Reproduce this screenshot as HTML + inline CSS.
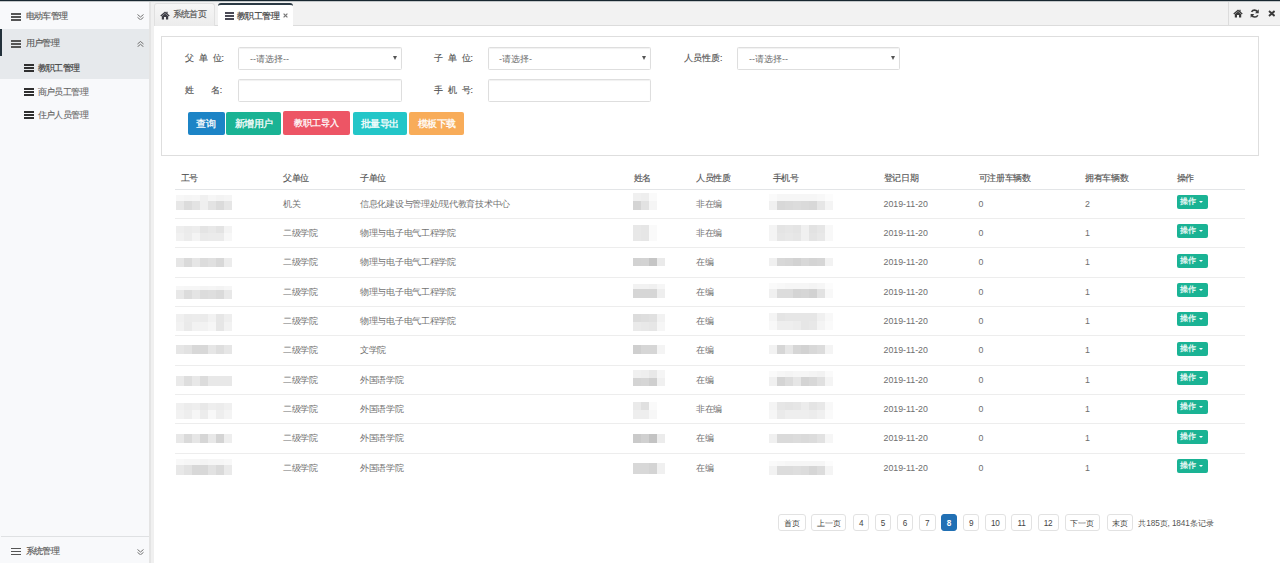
<!DOCTYPE html>
<html><head><meta charset="utf-8">
<style>
*{margin:0;padding:0;box-sizing:border-box}
html,body{width:1280px;height:563px;overflow:hidden;background:#fff;font-family:"Liberation Sans",sans-serif;font-size:8.5px;color:#676a6c;position:relative}
.a{position:absolute}
.t{position:absolute;white-space:nowrap;line-height:10px;letter-spacing:-0.3px}
.ham{position:absolute;width:10px;height:8px}
.ham i{position:absolute;left:0;width:9.6px;height:1.65px;background:#555}
.ham i:nth-child(1){top:0}.ham i:nth-child(2){top:3px}.ham i:nth-child(3){top:6px}
.st{color:#5a5a5a;letter-spacing:-0.6px;-webkit-text-stroke:0.15px #5a5a5a}
.tab{position:absolute;top:3px;height:23px;border-radius:3px 3px 0 0}
.sel{position:absolute;height:23px;border:1px solid #dedede;border-radius:1.5px;background:#fff;box-shadow:inset 0 1px 1px rgba(0,0,0,.06)}
.lbl{color:#555;letter-spacing:0;font-size:8.6px;-webkit-text-stroke:0.15px #555}
.ph{color:#6e6e6e;font-size:9px;letter-spacing:0}
.btn{position:absolute;top:112px;height:23px;border-radius:2px;color:#fff;text-align:center;line-height:23px;font-size:9.5px;letter-spacing:-0.45px;white-space:nowrap;-webkit-text-stroke:0.25px #fff}
.arrow{position:absolute;width:0;height:0;border-left:2.3px solid transparent;border-right:2.3px solid transparent;border-top:4.2px solid #555}
.th{color:#555;-webkit-text-stroke:0.15px #555}
.td{color:#727272}
.num{letter-spacing:0;font-size:8.8px;color:#6e6e6e}
.rl{left:175px;width:1070px;height:1px;background:#ededed}
.opb{position:absolute;left:1176.5px;width:31.5px;height:14px;background:#1ab394;border-radius:2px}
.opb span{position:absolute;left:3.5px;top:2px;color:#fff;font-size:8.2px;line-height:10px;letter-spacing:-0.4px;white-space:nowrap;-webkit-text-stroke:0.2px #fff}
.caret{position:absolute;left:22.5px;top:6px;width:0;height:0;border-left:2.5px solid transparent;border-right:2.5px solid transparent;border-top:2.5px solid #fff}
.mz{filter:blur(0.5px)}
.pg{position:absolute;top:514px;height:16.6px;border:1px solid #e2e2e2;border-radius:3px;background:#fff;color:#444;text-align:center;line-height:17px;font-size:8.2px;white-space:nowrap;letter-spacing:-0.2px}
.pg.act{background:#2170b4;border-color:#2170b4;color:#fff;font-weight:bold}
</style></head><body>
<div class="a" style="left:0;top:0;width:1280px;height:1px;background:#182730"></div>
<div class="a" style="left:0;top:1px;width:1280px;height:1px;background:#c3c7c9"></div>
<div class="a" style="left:0;top:2px;width:149px;height:561px;background:#f8f9fb"></div>
<div class="a" style="left:149px;top:2px;width:2px;height:561px;background:#e4e4e4"></div>
<div class="a" style="left:151px;top:2px;width:3px;height:561px;background:#f0f0f0"></div>
<div class="ham" style="left:11px;top:13px"><i style="background:#555"></i><i style="background:#555"></i><i style="background:#555"></i></div>
<div class="t st" style="left:25.5px;top:10.5px">电动车管理</div>
<svg class="a" style="left:137.2px;top:13.5px" width="7" height="6.5" viewBox="0 0 7 6.5"><path d="M0.5 0.5 L3.5 3 L6.5 0.5 M0.5 3.3 L3.5 5.8 L6.5 3.3" fill="none" stroke="#6a6a6a" stroke-width="0.95"/></svg>
<div class="a" style="left:0;top:28.5px;width:149px;height:50.5px;background:#e6e9ec"></div>
<div class="a" style="left:0;top:29px;width:2px;height:27px;background:#23313b"></div>
<div class="ham" style="left:11px;top:40px"><i style="background:#555"></i><i style="background:#555"></i><i style="background:#555"></i></div>
<div class="t st" style="left:25.5px;top:38px">用户管理</div>
<svg class="a" style="left:137.2px;top:40.5px" width="7" height="6.5" viewBox="0 0 7 6.5"><path d="M0.5 3 L3.5 0.5 L6.5 3 M0.5 5.8 L3.5 3.3 L6.5 5.8" fill="none" stroke="#6a6a6a" stroke-width="0.95"/></svg>
<div class="ham" style="left:24px;top:64.2px"><i style="background:#303030"></i><i style="background:#303030"></i><i style="background:#303030"></i></div>
<div class="t st" style="left:37.5px;top:63px;color:#444;-webkit-text-stroke:0.2px #444">教职工管理</div>
<div class="ham" style="left:24px;top:88.2px"><i style="background:#303030"></i><i style="background:#303030"></i><i style="background:#303030"></i></div>
<div class="t st" style="left:37.5px;top:86.5px;color:#666;-webkit-text-stroke:0.1px #666">商户员工管理</div>
<div class="ham" style="left:24px;top:111.4px"><i style="background:#303030"></i><i style="background:#303030"></i><i style="background:#303030"></i></div>
<div class="t st" style="left:37.5px;top:109.5px;color:#666;-webkit-text-stroke:0.1px #666">住户人员管理</div>
<div class="a" style="left:1px;top:536px;width:148px;height:1px;background:#dfe1e3"></div>
<div class="ham" style="left:11px;top:547.5px"><i style="background:#555"></i><i style="background:#555"></i><i style="background:#555"></i></div>
<div class="t st" style="left:25.5px;top:546px">系统管理</div>
<svg class="a" style="left:137.2px;top:548.6px" width="7" height="6.5" viewBox="0 0 7 6.5"><path d="M0.5 0.5 L3.5 3 L6.5 0.5 M0.5 3.3 L3.5 5.8 L6.5 3.3" fill="none" stroke="#6a6a6a" stroke-width="0.95"/></svg>
<div class="a" style="left:154px;top:2px;width:1126px;height:24px;background:#f2f2f2;border-bottom:1px solid #dcdcdc"></div>
<div class="tab" style="left:154px;width:61px;background:linear-gradient(#f6f6f6,#ececec);border:1px solid #e0e0e0;border-bottom:none"></div>
<svg class="a" style="left:160.2px;top:11px" width="10" height="8.6" viewBox="0 0 10 8.6"><path d="M5 0.6 L0.3 4.6 L1.2 5.4 L5 2.2 L8.8 5.4 L9.7 4.6 L7.6 2.8 L7.6 0.8 L6.4 0.8 L6.4 1.8 Z" fill="#3c3c44"/><path d="M1.8 5.2 L5 2.6 L8.2 5.2 L8.2 8.4 L6 8.4 L6 6 L4 6 L4 8.4 L1.8 8.4 Z" fill="#3c3c44"/></svg>
<div class="t st" style="left:172.7px;top:8.7px;color:#555;-webkit-text-stroke:0.15px #555">系统首页</div>
<div class="tab" style="left:218px;width:75px;background:#fff;border-top:2px solid #2b3a44"></div>
<div class="ham" style="left:224.8px;top:12px"><i style="background:#4a4a56"></i><i style="background:#4a4a56"></i><i style="background:#4a4a56"></i></div>
<div class="t st" style="left:237px;top:11px;color:#444;-webkit-text-stroke:0.2px #444">教职工管理</div>
<svg class="a" style="left:283px;top:12.5px" width="5" height="5" viewBox="0 0 5 5"><path d="M0.6 0.6 L4.4 4.4 M4.4 0.6 L0.6 4.4" stroke="#777" stroke-width="1.2"/></svg>
<div class="a" style="left:1228px;top:2px;width:1px;height:23px;background:#dcdcdc"></div>
<svg class="a" style="left:1232.6px;top:9px" width="10" height="8.6" viewBox="0 0 10 8.6"><path d="M5 0.6 L0.3 4.6 L1.2 5.4 L5 2.2 L8.8 5.4 L9.7 4.6 L7.6 2.8 L7.6 0.8 L6.4 0.8 L6.4 1.8 Z" fill="#3a3a3a"/><path d="M1.8 5.2 L5 2.6 L8.2 5.2 L8.2 8.4 L6 8.4 L6 6 L4 6 L4 8.4 L1.8 8.4 Z" fill="#3a3a3a"/></svg>
<svg class="a" style="left:1249.8px;top:8.8px" width="9.4" height="9.2" viewBox="0 0 10 10"><path d="M8.2 3.6 A3.6 3.6 0 0 0 1.6 3.2" fill="none" stroke="#3a3a3a" stroke-width="1.7"/><path d="M9.4 0.4 L9.4 4.6 L5.4 4.6 Z" fill="#3a3a3a"/><path d="M1.8 6.4 A3.6 3.6 0 0 0 8.4 6.8" fill="none" stroke="#3a3a3a" stroke-width="1.7"/><path d="M0.6 9.6 L0.6 5.4 L4.6 5.4 Z" fill="#3a3a3a"/></svg>
<svg class="a" style="left:1267.6px;top:10.2px" width="7.6" height="7" viewBox="0 0 7.6 7"><path d="M1 1 L6.6 6 M6.6 1 L1 6" stroke="#3a3a3a" stroke-width="1.9"/></svg>
<div class="a" style="left:161px;top:36px;width:1098px;height:120px;border:1px solid #dedede"></div>
<div class="t lbl" style="left:185px;top:52.5px">父&nbsp;&nbsp;单&nbsp;&nbsp;位:</div>
<div class="sel" style="left:238px;top:46.5px;width:164px"></div>
<div class="t ph" style="left:250px;top:53.5px">--请选择--</div>
<div class="arrow" style="left:392.5px;top:56px"></div>
<div class="t lbl" style="left:434px;top:52.5px">子&nbsp;&nbsp;单&nbsp;&nbsp;位:</div>
<div class="sel" style="left:488px;top:46.5px;width:163px"></div>
<div class="t ph" style="left:499px;top:53.5px">-请选择-</div>
<div class="arrow" style="left:641.5px;top:56px"></div>
<div class="t lbl" style="left:684px;top:52.5px">人员性质:</div>
<div class="sel" style="left:737px;top:46.5px;width:163px"></div>
<div class="t ph" style="left:749px;top:53.5px">--请选择--</div>
<div class="arrow" style="left:891.3px;top:56px"></div>
<div class="t lbl" style="left:185px;top:84.8px">姓&nbsp;&nbsp;&nbsp;&nbsp;&nbsp;&nbsp;&nbsp;名:</div>
<div class="sel" style="left:238px;top:79px;width:164px"></div>
<div class="t lbl" style="left:434px;top:84.8px">手&nbsp;&nbsp;机&nbsp;&nbsp;号:</div>
<div class="sel" style="left:488px;top:79px;width:163px"></div>
<div class="btn" style="left:188px;width:36.5px;background:#1c84c6;text-indent:-1px">查询</div>
<div class="btn" style="left:226.2px;width:55px;background:#1ab394">新增用户</div>
<div class="btn" style="left:283px;top:111.2px;height:23.6px;width:67px;background:#ed5565;font-size:8.5px;letter-spacing:-0.15px;line-height:25px">教职工导入</div>
<div class="btn" style="left:352.6px;width:54.5px;background:#23c6c8">批量导出</div>
<div class="btn" style="left:409.4px;width:54.6px;background:#f8ac59">模板下载</div>
<div class="t th" style="left:180.5px;top:172.5px">工号</div>
<div class="t th" style="left:283px;top:172.5px">父单位</div>
<div class="t th" style="left:360px;top:172.5px">子单位</div>
<div class="t th" style="left:633.5px;top:172.5px">姓名</div>
<div class="t th" style="left:696px;top:172.5px">人员性质</div>
<div class="t th" style="left:772.5px;top:172.5px">手机号</div>
<div class="t th" style="left:883.5px;top:172.5px">登记日期</div>
<div class="t th" style="left:978.5px;top:172.5px">可注册车辆数</div>
<div class="t th" style="left:1085px;top:172.5px">拥有车辆数</div>
<div class="t th" style="left:1176.5px;top:172.5px">操作</div>
<div class="a" style="left:175px;top:188.6px;width:1070px;height:1.3px;background:#e3e5e7"></div>
<div class="t td" style="left:283px;top:198.70px">机关</div>
<div class="t td" style="left:360px;top:198.70px">信息化建设与管理处/现代教育技术中心</div>
<div class="t td" style="left:696px;top:198.70px">非在编</div>
<div class="t td num" style="left:883.5px;top:198.70px">2019-11-20</div>
<div class="t td num" style="left:978.5px;top:198.70px">0</div>
<div class="t td num" style="left:1085px;top:198.70px">2</div>
<div class="opb" style="top:195.10px"><span>操作</span><i class="caret"></i></div>
<div class="a rl" style="top:218.10px"></div>
<div class="t td" style="left:283px;top:228.03px">二级学院</div>
<div class="t td" style="left:360px;top:228.03px">物理与电子电气工程学院</div>
<div class="t td" style="left:696px;top:228.03px">非在编</div>
<div class="t td num" style="left:883.5px;top:228.03px">2019-11-20</div>
<div class="t td num" style="left:978.5px;top:228.03px">0</div>
<div class="t td num" style="left:1085px;top:228.03px">1</div>
<div class="opb" style="top:224.43px"><span>操作</span><i class="caret"></i></div>
<div class="a rl" style="top:247.43px"></div>
<div class="t td" style="left:283px;top:257.37px">二级学院</div>
<div class="t td" style="left:360px;top:257.37px">物理与电子电气工程学院</div>
<div class="t td" style="left:696px;top:257.37px">在编</div>
<div class="t td num" style="left:883.5px;top:257.37px">2019-11-20</div>
<div class="t td num" style="left:978.5px;top:257.37px">0</div>
<div class="t td num" style="left:1085px;top:257.37px">1</div>
<div class="opb" style="top:253.77px"><span>操作</span><i class="caret"></i></div>
<div class="a rl" style="top:276.77px"></div>
<div class="t td" style="left:283px;top:286.70px">二级学院</div>
<div class="t td" style="left:360px;top:286.70px">物理与电子电气工程学院</div>
<div class="t td" style="left:696px;top:286.70px">在编</div>
<div class="t td num" style="left:883.5px;top:286.70px">2019-11-20</div>
<div class="t td num" style="left:978.5px;top:286.70px">0</div>
<div class="t td num" style="left:1085px;top:286.70px">1</div>
<div class="opb" style="top:283.10px"><span>操作</span><i class="caret"></i></div>
<div class="a rl" style="top:306.10px"></div>
<div class="t td" style="left:283px;top:316.03px">二级学院</div>
<div class="t td" style="left:360px;top:316.03px">物理与电子电气工程学院</div>
<div class="t td" style="left:696px;top:316.03px">在编</div>
<div class="t td num" style="left:883.5px;top:316.03px">2019-11-20</div>
<div class="t td num" style="left:978.5px;top:316.03px">0</div>
<div class="t td num" style="left:1085px;top:316.03px">1</div>
<div class="opb" style="top:312.43px"><span>操作</span><i class="caret"></i></div>
<div class="a rl" style="top:335.43px"></div>
<div class="t td" style="left:283px;top:345.37px">二级学院</div>
<div class="t td" style="left:360px;top:345.37px">文学院</div>
<div class="t td" style="left:696px;top:345.37px">在编</div>
<div class="t td num" style="left:883.5px;top:345.37px">2019-11-20</div>
<div class="t td num" style="left:978.5px;top:345.37px">0</div>
<div class="t td num" style="left:1085px;top:345.37px">1</div>
<div class="opb" style="top:341.76px"><span>操作</span><i class="caret"></i></div>
<div class="a rl" style="top:364.76px"></div>
<div class="t td" style="left:283px;top:374.70px">二级学院</div>
<div class="t td" style="left:360px;top:374.70px">外国语学院</div>
<div class="t td" style="left:696px;top:374.70px">在编</div>
<div class="t td num" style="left:883.5px;top:374.70px">2019-11-20</div>
<div class="t td num" style="left:978.5px;top:374.70px">0</div>
<div class="t td num" style="left:1085px;top:374.70px">1</div>
<div class="opb" style="top:371.10px"><span>操作</span><i class="caret"></i></div>
<div class="a rl" style="top:394.10px"></div>
<div class="t td" style="left:283px;top:404.03px">二级学院</div>
<div class="t td" style="left:360px;top:404.03px">外国语学院</div>
<div class="t td" style="left:696px;top:404.03px">非在编</div>
<div class="t td num" style="left:883.5px;top:404.03px">2019-11-20</div>
<div class="t td num" style="left:978.5px;top:404.03px">0</div>
<div class="t td num" style="left:1085px;top:404.03px">1</div>
<div class="opb" style="top:400.43px"><span>操作</span><i class="caret"></i></div>
<div class="a rl" style="top:423.43px"></div>
<div class="t td" style="left:283px;top:433.36px">二级学院</div>
<div class="t td" style="left:360px;top:433.36px">外国语学院</div>
<div class="t td" style="left:696px;top:433.36px">在编</div>
<div class="t td num" style="left:883.5px;top:433.36px">2019-11-20</div>
<div class="t td num" style="left:978.5px;top:433.36px">0</div>
<div class="t td num" style="left:1085px;top:433.36px">1</div>
<div class="opb" style="top:429.76px"><span>操作</span><i class="caret"></i></div>
<div class="a rl" style="top:452.76px"></div>
<div class="t td" style="left:283px;top:462.70px">二级学院</div>
<div class="t td" style="left:360px;top:462.70px">外国语学院</div>
<div class="t td" style="left:696px;top:462.70px">在编</div>
<div class="t td num" style="left:883.5px;top:462.70px">2019-11-20</div>
<div class="t td num" style="left:978.5px;top:462.70px">0</div>
<div class="t td num" style="left:1085px;top:462.70px">1</div>
<div class="opb" style="top:459.10px"><span>操作</span><i class="caret"></i></div>
<div class="a mz" style="left:176.1px;top:194.9px;width:56.0px;height:6.9px;background:linear-gradient(90deg,#f7f7f7 0.0px 8.0px,#f5f5f5 8.0px 16.0px,#f6f6f6 16.0px 24.0px,#f0f0f0 24.0px 32.0px,#f6f6f6 32.0px 40.0px,#f3f3f3 40.0px 48.0px,#f5f5f5 48.0px 56.0px)"></div>
<div class="a mz" style="left:176.1px;top:201.2px;width:56.0px;height:8.4px;background:linear-gradient(90deg,#e7e7e7 0.0px 8.0px,#dcdcdc 8.0px 16.0px,#e3e3e3 16.0px 24.0px,#efefef 24.0px 32.0px,#e3e3e3 32.0px 40.0px,#dbdbdb 40.0px 48.0px,#e6e6e6 48.0px 56.0px)"></div>
<div class="a mz" style="left:632.7px;top:193px;width:24.0px;height:8.6px;background:linear-gradient(90deg,#f0f0f0 0.0px 8.0px,#eeeeee 8.0px 16.0px,#fafafa 16.0px 24.0px)"></div>
<div class="a mz" style="left:632.7px;top:201px;width:24.0px;height:8.9px;background:linear-gradient(90deg,#d4d4d4 0.0px 8.0px,#e2e2e2 8.0px 16.0px,#f5f5f5 16.0px 24.0px)"></div>
<div class="a mz" style="left:768.9px;top:193.9px;width:64.4px;height:7.6px;background:linear-gradient(90deg,#fafafa 0.0px 8.1px,#f6f6f6 8.1px 16.1px,#f6f6f6 16.1px 24.2px,#f6f6f6 24.2px 32.2px,#f6f6f6 32.2px 40.2px,#f6f6f6 40.2px 48.3px,#f8f8f8 48.3px 56.4px,#fcfcfc 56.4px 64.4px)"></div>
<div class="a mz" style="left:768.9px;top:200.9px;width:64.4px;height:9.0px;background:linear-gradient(90deg,#f0f0f0 0.0px 8.1px,#d8d8d8 8.1px 16.1px,#dadada 16.1px 24.2px,#dcdcdc 24.2px 32.2px,#dadada 32.2px 40.2px,#d8d8d8 40.2px 48.3px,#e6e6e6 48.3px 56.4px,#f4f4f4 56.4px 64.4px)"></div>
<div class="a mz" style="left:176.1px;top:225.6px;width:56.0px;height:8.2px;background:linear-gradient(90deg,#eeeeee 0.0px 8.0px,#ebebeb 8.0px 16.0px,#ededed 16.0px 24.0px,#e4e4e4 24.0px 32.0px,#e8e8e8 32.0px 40.0px,#e3e3e3 40.0px 48.0px,#f3f3f3 48.0px 56.0px)"></div>
<div class="a mz" style="left:176.1px;top:233.2px;width:56.0px;height:8.2px;background:linear-gradient(90deg,#f1f1f1 0.0px 8.0px,#ececec 8.0px 16.0px,#f4f4f4 16.0px 24.0px,#eaeaea 24.0px 32.0px,#ebebeb 32.0px 40.0px,#ebebeb 40.0px 48.0px,#f7f7f7 48.0px 56.0px)"></div>
<div class="a mz" style="left:632.7px;top:224.8px;width:24.0px;height:8.3px;background:linear-gradient(90deg,#e8e8e8 0.0px 8.0px,#e6e6e6 8.0px 16.0px,#fafafa 16.0px 24.0px)"></div>
<div class="a mz" style="left:632.7px;top:232.5px;width:24.0px;height:8.4px;background:linear-gradient(90deg,#e8e8e8 0.0px 8.0px,#e6e6e6 8.0px 16.0px,#fafafa 16.0px 24.0px)"></div>
<div class="a mz" style="left:768.9px;top:224.8px;width:64.4px;height:8.3px;background:linear-gradient(90deg,#f4f4f4 0.0px 8.1px,#e4e4e4 8.1px 16.1px,#e6e6e6 16.1px 24.2px,#e4e4e4 24.2px 32.2px,#f0f0f0 32.2px 40.2px,#e2e2e2 40.2px 48.3px,#e6e6e6 48.3px 56.4px,#f8f8f8 56.4px 64.4px)"></div>
<div class="a mz" style="left:768.9px;top:232.5px;width:64.4px;height:8.4px;background:linear-gradient(90deg,#f4f4f4 0.0px 8.1px,#e6e6e6 8.1px 16.1px,#e8e8e8 16.1px 24.2px,#e6e6e6 24.2px 32.2px,#f0f0f0 32.2px 40.2px,#e4e4e4 40.2px 48.3px,#e8e8e8 48.3px 56.4px,#f8f8f8 56.4px 64.4px)"></div>
<div class="a mz" style="left:176.1px;top:258px;width:56.0px;height:8.6px;background:linear-gradient(90deg,#e6e6e6 0.0px 8.0px,#dadada 8.0px 16.0px,#e6e6e6 16.0px 24.0px,#dcdcdc 24.0px 32.0px,#e0e0e0 32.0px 40.0px,#d8d8d8 40.0px 48.0px,#ececec 48.0px 56.0px)"></div>
<div class="a mz" style="left:632.7px;top:257.5px;width:32.0px;height:8.6px;background:linear-gradient(90deg,#d2d2d2 0.0px 8.0px,#d3d3d3 8.0px 16.0px,#c5c5c5 16.0px 24.0px,#eaeaea 24.0px 32.0px)"></div>
<div class="a mz" style="left:768.9px;top:257.5px;width:64.4px;height:8.6px;background:linear-gradient(90deg,#f0f0f0 0.0px 8.1px,#d8d8d8 8.1px 16.1px,#d6d6d6 16.1px 24.2px,#d2d2d2 24.2px 32.2px,#d8d8d8 32.2px 40.2px,#d4d4d4 40.2px 48.3px,#d6d6d6 48.3px 56.4px,#f2f2f2 56.4px 64.4px)"></div>
<div class="a mz" style="left:176.1px;top:286px;width:56.0px;height:4.6px;background:linear-gradient(90deg,#f7f7f7 0.0px 8.0px,#f6f6f6 8.0px 16.0px,#f6f6f6 16.0px 24.0px,#f4f4f4 24.0px 32.0px,#f5f5f5 32.0px 40.0px,#f3f3f3 40.0px 48.0px,#f6f6f6 48.0px 56.0px)"></div>
<div class="a mz" style="left:176.1px;top:290px;width:56.0px;height:8.6px;background:linear-gradient(90deg,#e8e8e8 0.0px 8.0px,#dcdcdc 8.0px 16.0px,#e4e4e4 16.0px 24.0px,#dcdcdc 24.0px 32.0px,#dedede 32.0px 40.0px,#dadada 40.0px 48.0px,#e8e8e8 48.0px 56.0px)"></div>
<div class="a mz" style="left:632.7px;top:284px;width:32.0px;height:5.6px;background:linear-gradient(90deg,#f2f2f2 0.0px 8.0px,#f2f2f2 8.0px 16.0px,#f0f0f0 16.0px 24.0px,#f6f6f6 24.0px 32.0px)"></div>
<div class="a mz" style="left:632.7px;top:289px;width:32.0px;height:8.6px;background:linear-gradient(90deg,#d6d6d6 0.0px 8.0px,#d6d6d6 8.0px 16.0px,#d6d6d6 16.0px 24.0px,#eeeeee 24.0px 32.0px)"></div>
<div class="a mz" style="left:768.9px;top:282.8px;width:64.4px;height:7.1px;background:linear-gradient(90deg,#fafafa 0.0px 8.1px,#f8f8f8 8.1px 16.1px,#f6f6f6 16.1px 24.2px,#f6f6f6 24.2px 32.2px,#f6f6f6 32.2px 40.2px,#f4f4f4 40.2px 48.3px,#f6f6f6 48.3px 56.4px,#fcfcfc 56.4px 64.4px)"></div>
<div class="a mz" style="left:768.9px;top:289.3px;width:64.4px;height:9.0px;background:linear-gradient(90deg,#f0f0f0 0.0px 8.1px,#dcdcdc 8.1px 16.1px,#dcdcdc 16.1px 24.2px,#d4d4d4 24.2px 32.2px,#d6d6d6 32.2px 40.2px,#d2d2d2 40.2px 48.3px,#e2e2e2 48.3px 56.4px,#f8f8f8 56.4px 64.4px)"></div>
<div class="a mz" style="left:176.1px;top:314px;width:56.0px;height:8.6px;background:linear-gradient(90deg,#f0f0f0 0.0px 8.0px,#ebebeb 8.0px 16.0px,#ececec 16.0px 24.0px,#ebebeb 24.0px 32.0px,#f2f2f2 32.0px 40.0px,#e6e6e6 40.0px 48.0px,#eeeeee 48.0px 56.0px)"></div>
<div class="a mz" style="left:176.1px;top:322px;width:56.0px;height:8.6px;background:linear-gradient(90deg,#f2f2f2 0.0px 8.0px,#eaeaea 8.0px 16.0px,#f2f2f2 16.0px 24.0px,#f2f2f2 24.0px 32.0px,#f6f6f6 32.0px 40.0px,#e6e6e6 40.0px 48.0px,#f2f2f2 48.0px 56.0px)"></div>
<div class="a mz" style="left:632.7px;top:313.7px;width:32.0px;height:8.9px;background:linear-gradient(90deg,#dcdcdc 0.0px 8.0px,#dedede 8.0px 16.0px,#e0e0e0 16.0px 24.0px,#f2f2f2 24.0px 32.0px)"></div>
<div class="a mz" style="left:632.7px;top:322px;width:32.0px;height:9.1px;background:linear-gradient(90deg,#eaeaea 0.0px 8.0px,#e8e8e8 8.0px 16.0px,#e6e6e6 16.0px 24.0px,#f6f6f6 24.0px 32.0px)"></div>
<div class="a mz" style="left:768.9px;top:313.2px;width:64.4px;height:8.8px;background:linear-gradient(90deg,#f4f4f4 0.0px 8.1px,#e4e4e4 8.1px 16.1px,#e6e6e6 16.1px 24.2px,#e6e6e6 24.2px 32.2px,#e6e6e6 32.2px 40.2px,#e6e6e6 40.2px 48.3px,#f0f0f0 48.3px 56.4px,#f8f8f8 56.4px 64.4px)"></div>
<div class="a mz" style="left:768.9px;top:321.4px;width:64.4px;height:8.9px;background:linear-gradient(90deg,#f8f8f8 0.0px 8.1px,#eeeeee 8.1px 16.1px,#eeeeee 16.1px 24.2px,#ececec 24.2px 32.2px,#e6e6e6 32.2px 40.2px,#e8e8e8 40.2px 48.3px,#f4f4f4 48.3px 56.4px,#fafafa 56.4px 64.4px)"></div>
<div class="a mz" style="left:176.1px;top:345.3px;width:56.0px;height:8.9px;background:linear-gradient(90deg,#e6e6e6 0.0px 8.0px,#e2e2e2 8.0px 16.0px,#d8d8d8 16.0px 24.0px,#d8d8d8 24.0px 32.0px,#e6e6e6 32.0px 40.0px,#dedede 40.0px 48.0px,#e6e6e6 48.0px 56.0px)"></div>
<div class="a mz" style="left:632.7px;top:345.3px;width:32.0px;height:8.9px;background:linear-gradient(90deg,#cfcfcf 0.0px 8.0px,#d6d6d6 8.0px 16.0px,#d6d6d6 16.0px 24.0px,#f4f4f4 24.0px 32.0px)"></div>
<div class="a mz" style="left:768.9px;top:345.3px;width:64.4px;height:8.9px;background:linear-gradient(90deg,#f2f2f2 0.0px 8.1px,#d6d6d6 8.1px 16.1px,#e6e6e6 16.1px 24.2px,#d6d6d6 24.2px 32.2px,#d2d2d2 32.2px 40.2px,#d8d8d8 40.2px 48.3px,#dcdcdc 48.3px 56.4px,#f4f4f4 56.4px 64.4px)"></div>
<div class="a mz" style="left:176.1px;top:376.2px;width:56.0px;height:9.6px;background:linear-gradient(90deg,#eaeaea 0.0px 8.0px,#dedede 8.0px 16.0px,#e8e8e8 16.0px 24.0px,#dcdcdc 24.0px 32.0px,#e8e8e8 32.0px 40.0px,#e8e8e8 40.0px 48.0px,#e8e8e8 48.0px 56.0px)"></div>
<div class="a mz" style="left:632.7px;top:369.8px;width:32.0px;height:8.6px;background:linear-gradient(90deg,#f0f0f0 0.0px 8.0px,#eeeeee 8.0px 16.0px,#e8e8e8 16.0px 24.0px,#f5f5f5 24.0px 32.0px)"></div>
<div class="a mz" style="left:632.7px;top:377.8px;width:32.0px;height:8.6px;background:linear-gradient(90deg,#d4d4d4 0.0px 8.0px,#d6d6d6 8.0px 16.0px,#cfcfcf 16.0px 24.0px,#f0f0f0 24.0px 32.0px)"></div>
<div class="a mz" style="left:768.9px;top:371px;width:64.4px;height:6.6px;background:linear-gradient(90deg,#fafafa 0.0px 8.1px,#f6f6f6 8.1px 16.1px,#f4f4f4 16.1px 24.2px,#f6f6f6 24.2px 32.2px,#f6f6f6 32.2px 40.2px,#f4f4f4 40.2px 48.3px,#f2f2f2 48.3px 56.4px,#fafafa 56.4px 64.4px)"></div>
<div class="a mz" style="left:768.9px;top:377px;width:64.4px;height:8.9px;background:linear-gradient(90deg,#f0f0f0 0.0px 8.1px,#d4d4d4 8.1px 16.1px,#dcdcdc 16.1px 24.2px,#e6e6e6 24.2px 32.2px,#d4d4d4 32.2px 40.2px,#d8d8d8 40.2px 48.3px,#e0e0e0 48.3px 56.4px,#f4f4f4 56.4px 64.4px)"></div>
<div class="a mz" style="left:176.1px;top:402.5px;width:56.0px;height:8.3px;background:linear-gradient(90deg,#f0f0f0 0.0px 8.0px,#ececec 8.0px 16.0px,#eeeeee 16.0px 24.0px,#e8e8e8 24.0px 32.0px,#eeeeee 32.0px 40.0px,#ececec 40.0px 48.0px,#f0f0f0 48.0px 56.0px)"></div>
<div class="a mz" style="left:176.1px;top:410.2px;width:56.0px;height:8.4px;background:linear-gradient(90deg,#f2f2f2 0.0px 8.0px,#eeeeee 8.0px 16.0px,#f6f6f6 16.0px 24.0px,#ececec 24.0px 32.0px,#f8f8f8 32.0px 40.0px,#eeeeee 40.0px 48.0px,#f4f4f4 48.0px 56.0px)"></div>
<div class="a mz" style="left:632.7px;top:401.5px;width:24.0px;height:8.8px;background:linear-gradient(90deg,#eaeaea 0.0px 8.0px,#e0e0e0 8.0px 16.0px,#fafafa 16.0px 24.0px)"></div>
<div class="a mz" style="left:632.7px;top:409.7px;width:24.0px;height:8.9px;background:linear-gradient(90deg,#eeeeee 0.0px 8.0px,#eeeeee 8.0px 16.0px,#f7f7f7 16.0px 24.0px)"></div>
<div class="a mz" style="left:768.9px;top:401.5px;width:64.4px;height:8.8px;background:linear-gradient(90deg,#f4f4f4 0.0px 8.1px,#e6e6e6 8.1px 16.1px,#e4e4e4 16.1px 24.2px,#e6e6e6 24.2px 32.2px,#ececec 32.2px 40.2px,#e4e4e4 40.2px 48.3px,#e8e8e8 48.3px 56.4px,#f8f8f8 56.4px 64.4px)"></div>
<div class="a mz" style="left:768.9px;top:409.7px;width:64.4px;height:8.9px;background:linear-gradient(90deg,#f6f6f6 0.0px 8.1px,#eaeaea 8.1px 16.1px,#eeeeee 16.1px 24.2px,#eeeeee 24.2px 32.2px,#eeeeee 32.2px 40.2px,#ececec 40.2px 48.3px,#f0f0f0 48.3px 56.4px,#fafafa 56.4px 64.4px)"></div>
<div class="a mz" style="left:176.1px;top:433.5px;width:56.0px;height:9.1px;background:linear-gradient(90deg,#e8e8e8 0.0px 8.0px,#dadada 8.0px 16.0px,#e6e6e6 16.0px 24.0px,#d6d6d6 24.0px 32.0px,#e8e8e8 32.0px 40.0px,#d4d4d4 40.0px 48.0px,#eeeeee 48.0px 56.0px)"></div>
<div class="a mz" style="left:632.7px;top:433.5px;width:32.0px;height:9.1px;background:linear-gradient(90deg,#cacaca 0.0px 8.0px,#d0d0d0 8.0px 16.0px,#c3c3c3 16.0px 24.0px,#ececec 24.0px 32.0px)"></div>
<div class="a mz" style="left:768.9px;top:433.5px;width:64.4px;height:9.1px;background:linear-gradient(90deg,#f0f0f0 0.0px 8.1px,#dadada 8.1px 16.1px,#dadada 16.1px 24.2px,#dcdcdc 24.2px 32.2px,#dadada 32.2px 40.2px,#dcdcdc 40.2px 48.3px,#e2e2e2 48.3px 56.4px,#f6f6f6 56.4px 64.4px)"></div>
<div class="a mz" style="left:176.1px;top:459px;width:56.0px;height:6.6px;background:linear-gradient(90deg,#f8f8f8 0.0px 8.0px,#f6f6f6 8.0px 16.0px,#f6f6f6 16.0px 24.0px,#f4f4f4 24.0px 32.0px,#f6f6f6 32.0px 40.0px,#f6f6f6 40.0px 48.0px,#f8f8f8 48.0px 56.0px)"></div>
<div class="a mz" style="left:176.1px;top:465px;width:56.0px;height:9.6px;background:linear-gradient(90deg,#e8e8e8 0.0px 8.0px,#e2e2e2 8.0px 16.0px,#d8d8d8 16.0px 24.0px,#d8d8d8 24.0px 32.0px,#e2e2e2 32.0px 40.0px,#dadada 40.0px 48.0px,#eaeaea 48.0px 56.0px)"></div>
<div class="a mz" style="left:632.7px;top:462.6px;width:32.0px;height:11.7px;background:linear-gradient(90deg,#d8d8d8 0.0px 8.0px,#d8d8d8 8.0px 16.0px,#d4d4d4 16.0px 24.0px,#f0f0f0 24.0px 32.0px)"></div>
<div class="a mz" style="left:768.9px;top:461.3px;width:64.4px;height:5.6px;background:linear-gradient(90deg,#fafafa 0.0px 8.1px,#f8f8f8 8.1px 16.1px,#f6f6f6 16.1px 24.2px,#f6f6f6 24.2px 32.2px,#f6f6f6 32.2px 40.2px,#f6f6f6 40.2px 48.3px,#f6f6f6 48.3px 56.4px,#fcfcfc 56.4px 64.4px)"></div>
<div class="a mz" style="left:768.9px;top:466.3px;width:64.4px;height:8.3px;background:linear-gradient(90deg,#f2f2f2 0.0px 8.1px,#dcdcdc 8.1px 16.1px,#dcdcdc 16.1px 24.2px,#dedede 24.2px 32.2px,#dcdcdc 32.2px 40.2px,#d6d6d6 40.2px 48.3px,#dcdcdc 48.3px 56.4px,#f4f4f4 56.4px 64.4px)"></div>
<div class="pg" style="left:778.1px;width:27.8px">首页</div>
<div class="pg" style="left:811.2px;width:35.2px">上一页</div>
<div class="pg" style="left:852.8px;width:16.6px">4</div>
<div class="pg" style="left:874.8px;width:16.2px">5</div>
<div class="pg" style="left:896.9px;width:16.2px">6</div>
<div class="pg" style="left:918.8px;width:16.9px">7</div>
<div class="pg act" style="left:940.6px;width:16.9px">8</div>
<div class="pg" style="left:962.8px;width:16.6px">9</div>
<div class="pg" style="left:985.0px;width:20.6px">10</div>
<div class="pg" style="left:1011.2px;width:20.7px">11</div>
<div class="pg" style="left:1037.5px;width:21.2px">12</div>
<div class="pg" style="left:1064.5px;width:35.0px">下一页</div>
<div class="pg" style="left:1106.5px;width:26.9px">末页</div>
<div class="t" style="left:1138.4px;top:518.5px;color:#555;font-size:8.2px;letter-spacing:-0.1px">共185页, 1841条记录</div>
</body></html>
